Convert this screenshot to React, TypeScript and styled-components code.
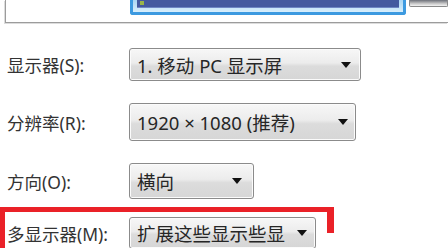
import React from "react";
import styled, { createGlobalStyle } from "styled-components";

const Global = createGlobalStyle`
  html, body { margin: 0; padding: 0; background: #fff; }
  * { box-sizing: border-box; }
`;

const Root = styled.div`
  position: relative;
  width: 448px;
  height: 248px;
  overflow: hidden;
  background: #fff;
  font-family: "Noto Sans", "Noto Sans CJK SC", sans-serif;
  color: #2c2c2c;
`;

const TopPanel = styled.div`
  display: flex;
  align-items: flex-start;
  height: 23px;
  margin-left: 5px;
  padding-left: 124px;
  border-left: 1px solid #9c9c9c;
  border-bottom: 1px solid #9c9c9c;
  box-shadow: -1px 1px 0 #dcdcdc;
`;

const Monitor = styled.div`
  display: flex;
  flex-direction: column;
  width: 286px;
  height: 15px;
  border: solid #3d9ae0;
  border-width: 0 3px 3px 3px;
  border-radius: 0 0 3px 3px;
  background: linear-gradient(#a9d6f4, #d8eefb);
  padding: 0 4px 4px 4px;
`;

const Screen = styled.div`
  position: relative;
  flex: 1;
  background: #44599f;
  border-bottom: 1px solid #6e86c4;
`;

const Dot = styled.div`
  position: absolute;
  left: 3px;
  top: 1px;
  width: 4px;
  height: 4px;
  background: #9ab44a;
`;

const SecondMonitor = styled.div`
  width: 40px;
  height: 7px;
  margin-left: 3px;
  border: 1px solid #8a8a8a;
  border-top: none;
  border-radius: 0 0 2px 2px;
  background: linear-gradient(#6d7079, #c9c9c9 60%, #f4f4f4);
`;

const Form = styled.div`
  display: flex;
  flex-direction: column;
  gap: 22px;
  padding: 25px 0 0 7px;
`;

const Row = styled.div<{ $mt?: number }>`
  display: flex;
  align-items: center;
  margin-top: ${(p) => p.$mt ?? 0}px;
`;

const Label = styled.div`
  width: 122px;
  font-size: 17.5px;
  color: #333;
  white-space: nowrap;
`;

const Select = styled.div<{ $w: number; $h: number; $pr: number }>`
  display: flex;
  align-items: center;
  justify-content: space-between;
  width: ${(p) => p.$w}px;
  height: ${(p) => p.$h}px;
  padding: 0 ${(p) => p.$pr}px 0 7px;
  border: 1px solid #8b8b8b;
  border-radius: 3px;
  background: linear-gradient(#f7f7f7, #ececec 45%, #dcdcdc 55%, #d6d6d6);
  box-shadow: inset 0 0 0 1px #fbfbfb;
  font-size: 18.5px;
  color: #262626;
  white-space: nowrap;
  overflow: hidden;
`;

const Highlight = styled.div`
  position: absolute;
  left: 0;
  top: 207px;
  width: 334px;
  height: 60px;
  border-top: 5px solid #ea2128;
  border-left: 5px solid #ea2128;
  &::after {
    content: "";
    position: absolute;
    right: 0;
    top: -5px;
    width: 7px;
    height: 26px;
    background: #ea2128;
  }
`;

const Arrow = () => (
  <svg width="10" height="6" viewBox="0 0 10 6">
    <path d="M0 0 H10 L5 6 Z" fill="#111" />
  </svg>
);

const rows = [
  { label: "显示器(S):", value: "1. 移动 PC 显示屏", w: 232, h: 33, pr: 9, mt: 0 },
  { label: "分辨率(R):", value: "1920 × 1080 (推荐)", w: 227, h: 38, pr: 7, mt: 0 },
  { label: "方向(O):", value: "横向", w: 125, h: 36, pr: 11, mt: 0 },
  { label: "多显示器(M):", value: "扩展这些显示些显", w: 187, h: 32, pr: 8, mt: -4 },
];

export default function App() {
  return (
    <Root>
      <Global />
      <TopPanel>
        <Monitor>
          <Screen>
            <Dot />
          </Screen>
        </Monitor>
        <SecondMonitor />
      </TopPanel>
      <Form>
        {rows.map((r) => (
          <Row key={r.label} $mt={r.mt}>
            <Label>{r.label}</Label>
            <Select $w={r.w} $h={r.h} $pr={r.pr}>
              <span>{r.value}</span>
              <Arrow />
            </Select>
          </Row>
        ))}
      </Form>
      <Highlight />
    </Root>
  );
}
